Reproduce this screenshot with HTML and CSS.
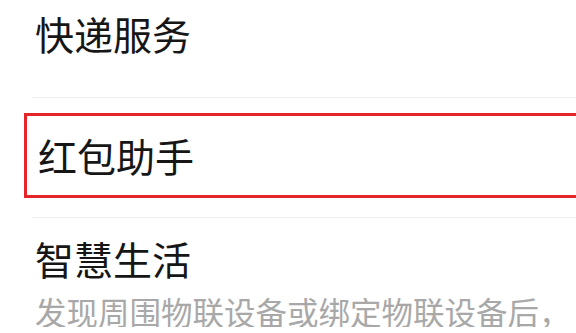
FILE: index.html
```html
<!DOCTYPE html>
<html>

<head>
  <meta name="viewport" content="width=device-width, initial-scale=1">
  <link rel="stylesheet" href="styles.css">
</head>

<body>
  <div class="list">
    <div class="item first">
      <div class="title">快递服务</div>
    </div>

    <div class="picked">
      <div class="title">红包助手</div>
    </div>

    <div class="item last">
      <div class="title">智慧生活</div>
      <div class="desc">发现周围物联设备或绑定物联设备后，</div>
    </div>
  </div>
</body>

</html>
```

FILE: styles.css
```css
/* ----------page--------------- */
body {
  padding: 0px;
  margin: 0px;
  background-color: #fff;
  font-family: "Noto Sans CJK SC", sans-serif;
  overflow: hidden;
}

.list {
  padding-left: 32px;
}

/* ----------rows--------------- */
.item {
  padding-left: 3px;
}

.item.first {
  height: 83px;
  padding-top: 14px;
  border-bottom: 1px solid #f1f1f1;
}

.item.last {
  padding-top: 21px;
  border-top: 1px solid #f1f1f1;
}

.title {
  font-size: 39px;
  line-height: 39px;
  color: #161616;
}

.desc {
  margin-top: 17px;
  font-size: 31.5px;
  line-height: 32px;
  color: #a8a8a8;
  white-space: nowrap;
}

/* the highlighted row */
.picked {
  margin: 15px -6px 19px -8px;
  height: 79px;
  padding-left: 11px;
  border: 3px solid #e6252b;
  display: flex;
  align-items: center;
}
```
